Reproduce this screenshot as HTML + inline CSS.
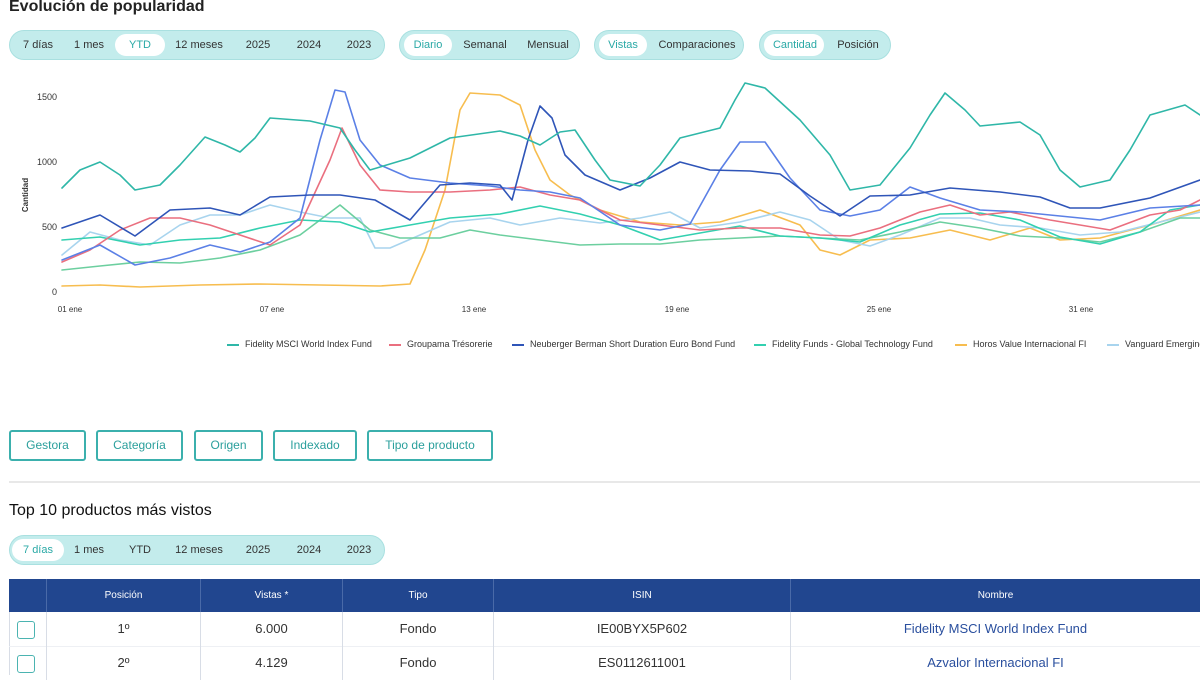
<!DOCTYPE html>
<html><head><meta charset="utf-8"><style>
*{margin:0;padding:0;box-sizing:border-box}
body{width:1200px;height:675px;overflow:hidden;background:#fff;font-family:"Liberation Sans",sans-serif;position:relative;color:#222}
.a{position:absolute}
.grp{position:absolute;height:30px;border-radius:15px;background:#c3ecec;border:1px solid #a9e0e0}
.it{position:absolute;top:0;height:28px;line-height:28px;font-size:11px;color:#333;transform:translateX(-50%);white-space:nowrap}
.act{position:absolute;top:3px;height:22px;border-radius:11px;background:#fff}
.on{color:#2aa9a6}
.btn{position:absolute;top:430px;height:31px;border:2px solid #3bb0ad;border-radius:3px;color:#2a9f9c;font-size:12px;text-align:center;line-height:27px}
.th{position:absolute;top:579px;height:33px;line-height:33px;color:#fff;font-size:10px;text-align:center;border-left:1px solid #4a6aa8}
.td{position:absolute;height:34px;line-height:34px;font-size:13px;text-align:center;color:#333;border-left:1px solid #d8dde6}
.cb{position:absolute;left:17px;width:18px;height:18px;border:1.5px solid #4bb4b1;border-radius:3px}
.lg{position:absolute;top:339px;font-size:9px;color:#333;white-space:nowrap}
.lg i{display:inline-block;width:12px;height:2px;vertical-align:middle;margin-right:6px}
</style></head><body>
<div class="a" style="left:9px;top:-2px;font-size:16px;font-weight:bold;color:#222">Evolución de popularidad</div>

<div class="grp" style="left:9px;top:30px;width:376px"><div class="act" style="left:105px;width:50px"></div>
<span class="it" style="left:28px">7 días</span><span class="it" style="left:79px">1 mes</span><span class="it on" style="left:130px">YTD</span><span class="it" style="left:189px">12 meses</span><span class="it" style="left:248px">2025</span><span class="it" style="left:299px">2024</span><span class="it" style="left:349px">2023</span></div>
<div class="grp" style="left:399px;top:30px;width:181px"><div class="act" style="left:4px;width:48px"></div>
<span class="it on" style="left:28px">Diario</span><span class="it" style="left:85px">Semanal</span><span class="it" style="left:148px">Mensual</span></div>
<div class="grp" style="left:594px;top:30px;width:150px"><div class="act" style="left:4px;width:48px"></div>
<span class="it on" style="left:28px">Vistas</span><span class="it" style="left:102px">Comparaciones</span></div>
<div class="grp" style="left:759px;top:30px;width:132px"><div class="act" style="left:4px;width:60px"></div>
<span class="it on" style="left:35px">Cantidad</span><span class="it" style="left:98px">Posición</span></div>

<svg class="a" style="left:0;top:70px" width="1200" height="260" viewBox="0 70 1200 260">
<g font-size="9" fill="#333" font-family="Liberation Sans">
<text x="57" y="100" text-anchor="end">1500</text><text x="57" y="165" text-anchor="end">1000</text><text x="57" y="230" text-anchor="end">500</text><text x="57" y="295" text-anchor="end">0</text>
<text x="0" y="0" transform="translate(28 195) rotate(-90)" font-size="8" font-weight="bold" text-anchor="middle">Cantidad</text>
<text x="70" y="312" font-size="8" text-anchor="middle">01 ene</text><text x="272" y="312" font-size="8" text-anchor="middle">07 ene</text><text x="474" y="312" font-size="8" text-anchor="middle">13 ene</text><text x="677" y="312" font-size="8" text-anchor="middle">19 ene</text><text x="879" y="312" font-size="8" text-anchor="middle">25 ene</text><text x="1081" y="312" font-size="8" text-anchor="middle">31 ene</text>
</g>
<g fill="none" stroke-width="1.6" stroke-linejoin="round" stroke-linecap="round">
<polyline stroke="#f7bd4f" points="62,286 100,285 140,287 200,285 260,284 320,285 380,286 410,284 425,250 445,190 460,110 470,93 500,95 520,105 535,150 550,180 570,195 600,210 640,222 680,225 720,222 760,210 800,225 820,250 840,255 870,240 910,238 950,230 990,240 1030,228 1060,240 1100,238 1150,225 1200,210"/>
<polyline stroke="#a8d4ee" points="62,255 90,232 120,240 150,245 180,225 210,215 240,215 270,205 300,212 330,218 360,218 375,248 390,248 420,235 450,222 490,218 520,225 560,218 600,223 640,218 670,212 700,228 740,222 780,212 810,220 840,240 870,246 900,235 940,218 970,218 1000,225 1040,228 1080,235 1120,232 1160,222 1200,212"/>
<polyline stroke="#6ccf9f" points="62,270 100,266 140,262 180,263 220,258 260,250 300,235 340,205 370,230 400,238 440,238 470,230 500,235 540,240 580,245 620,244 660,244 700,240 740,238 780,236 820,238 860,240 900,232 940,222 980,228 1020,236 1060,238 1100,242 1140,232 1180,218 1200,218"/>
<polyline stroke="#33d0b0" points="62,240 100,237 140,245 180,240 220,238 260,228 300,220 340,222 370,232 410,225 450,218 500,214 540,206 580,214 620,225 660,240 700,233 740,226 780,236 820,238 860,242 900,225 940,214 980,213 1020,220 1060,237 1100,244 1140,232 1170,210 1200,205"/>
<polyline stroke="#ea6f7f" points="62,262 90,250 120,230 150,218 180,218 210,225 240,235 270,245 300,225 330,160 342,128 360,165 380,190 410,192 450,192 490,190 520,187 550,195 580,200 620,220 660,225 700,230 740,228 780,228 820,235 850,236 880,228 920,212 950,205 980,215 1010,212 1050,220 1080,225 1110,230 1150,215 1180,210 1200,200"/>
<polyline stroke="#5b80e6" points="62,260 100,245 135,265 170,258 210,245 240,252 270,242 300,218 320,140 335,90 345,92 360,140 380,165 410,178 450,183 490,186 520,190 550,192 580,198 620,225 660,230 690,224 720,170 740,142 765,142 790,178 820,210 850,216 880,210 910,187 940,198 980,210 1020,212 1060,216 1100,220 1150,208 1200,205"/>
<polyline stroke="#2f55b8" points="62,228 100,215 135,236 170,210 210,208 240,215 270,197 310,195 340,195 375,200 410,220 440,185 470,183 500,185 512,200 528,140 540,106 552,118 565,155 585,175 620,190 650,178 680,162 710,170 750,171 780,174 810,196 840,216 870,196 910,195 950,188 1000,192 1040,197 1070,208 1100,208 1150,198 1200,180"/>
<polyline stroke="#2fb7a8" points="62,188 80,170 100,162 120,175 135,190 160,185 180,165 205,137 225,145 240,152 255,138 270,118 310,121 340,128 355,150 370,170 410,158 450,138 500,131 520,136 540,145 560,132 575,130 595,160 610,180 640,186 660,165 680,138 720,128 735,100 745,83 765,88 800,120 830,155 850,190 880,185 910,148 930,115 945,93 965,110 980,126 1020,122 1040,135 1060,170 1080,187 1110,180 1130,150 1150,115 1185,105 1200,115"/>
</g></svg>

<div class="lg" style="left:227px"><i style="background:#2fb7a8"></i>Fidelity MSCI World Index Fund</div>
<div class="lg" style="left:389px"><i style="background:#ea6f7f"></i>Groupama Trésorerie</div>
<div class="lg" style="left:512px"><i style="background:#2f55b8"></i>Neuberger Berman Short Duration Euro Bond Fund</div>
<div class="lg" style="left:754px"><i style="background:#33d0b0"></i>Fidelity Funds - Global Technology Fund</div>
<div class="lg" style="left:955px"><i style="background:#f7bd4f"></i>Horos Value Internacional FI</div>
<div class="lg" style="left:1107px"><i style="background:#a8d4ee"></i>Vanguard Emerging</div>

<div class="btn" style="left:9px;width:77px">Gestora</div>
<div class="btn" style="left:96px;width:87px">Categoría</div>
<div class="btn" style="left:194px;width:69px">Origen</div>
<div class="btn" style="left:273px;width:84px">Indexado</div>
<div class="btn" style="left:367px;width:126px">Tipo de producto</div>
<div class="a" style="left:9px;top:481px;width:1191px;height:2px;background:#e8e8e8"></div>
<div class="a" style="left:9px;top:502px;font-size:16px;color:#111">Top 10 productos más vistos</div>

<div class="grp" style="left:9px;top:535px;width:376px"><div class="act" style="left:2px;width:52px"></div>
<span class="it on" style="left:28px">7 días</span><span class="it" style="left:79px">1 mes</span><span class="it" style="left:130px">YTD</span><span class="it" style="left:189px">12 meses</span><span class="it" style="left:248px">2025</span><span class="it" style="left:299px">2024</span><span class="it" style="left:349px">2023</span></div>

<div class="a" style="left:9px;top:579px;width:1191px;height:33px;background:#21468f"></div>
<div class="th" style="left:46px;width:154px">Posición</div>
<div class="th" style="left:200px;width:142px">Vistas *</div>
<div class="th" style="left:342px;width:151px">Tipo</div>
<div class="th" style="left:493px;width:297px">ISIN</div>
<div class="th" style="left:790px;width:410px">Nombre</div>
<div class="a" style="left:9px;top:612px;width:1px;height:63px;background:#d8dde6"></div>
<div class="a" style="left:9px;top:646px;width:1191px;height:1px;background:#eef0f4"></div>
<div class="cb" style="top:621px"></div><div class="cb" style="top:655px"></div>
<div class="td" style="left:46px;top:612px;width:154px">1º</div>
<div class="td" style="left:200px;top:612px;width:142px">6.000</div>
<div class="td" style="left:342px;top:612px;width:151px">Fondo</div>
<div class="td" style="left:493px;top:612px;width:297px">IE00BYX5P602</div>
<div class="td" style="left:790px;top:612px;width:410px;color:#2a4f9e">Fidelity MSCI World Index Fund</div>
<div class="td" style="left:46px;top:646px;width:154px">2º</div>
<div class="td" style="left:200px;top:646px;width:142px">4.129</div>
<div class="td" style="left:342px;top:646px;width:151px">Fondo</div>
<div class="td" style="left:493px;top:646px;width:297px">ES0112611001</div>
<div class="td" style="left:790px;top:646px;width:410px;color:#2a4f9e">Azvalor Internacional FI</div>
</body></html>
